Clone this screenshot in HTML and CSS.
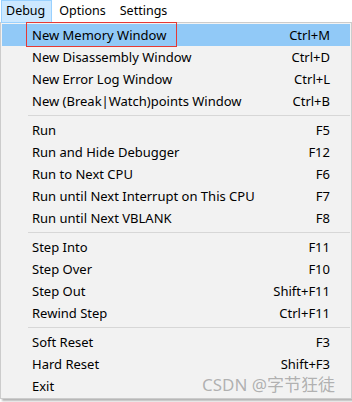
FILE: index.html
```html
<!DOCTYPE html>
<html lang="en">
<head>
  <meta charset="UTF-8" />
  <title>Debug menu</title>
  <link rel="stylesheet" href="styles.css">
</head>
<body>

<!-- Menu bar -->
<div class="menubar">
  <span class="menubar-item open">Debug</span>
  <span class="menubar-item">Options</span>
  <span class="menubar-item">Settings</span>
</div>

<!-- Dropdown -->
<div class="popup">
  <div class="item active"><span class="label">New Memory Window</span><span class="key">Ctrl+M</span></div>
  <div class="item"><span class="label">New Disassembly Window</span><span class="key">Ctrl+D</span></div>
  <div class="item"><span class="label">New Error Log Window</span><span class="key">Ctrl+L</span></div>
  <div class="item"><span class="label">New (Break|Watch)points Window</span><span class="key">Ctrl+B</span></div>
  <div class="sep"></div>
  <div class="item"><span class="label">Run</span><span class="key">F5</span></div>
  <div class="item"><span class="label">Run and Hide Debugger</span><span class="key">F12</span></div>
  <div class="item"><span class="label">Run to Next CPU</span><span class="key">F6</span></div>
  <div class="item"><span class="label">Run until Next Interrupt on This CPU</span><span class="key">F7</span></div>
  <div class="item"><span class="label">Run until Next VBLANK</span><span class="key">F8</span></div>
  <div class="sep"></div>
  <div class="item"><span class="label">Step Into</span><span class="key">F11</span></div>
  <div class="item"><span class="label">Step Over</span><span class="key">F10</span></div>
  <div class="item"><span class="label">Step Out</span><span class="key">Shift+F11</span></div>
  <div class="item"><span class="label">Rewind Step</span><span class="key">Ctrl+F11</span></div>
  <div class="sep"></div>
  <div class="item"><span class="label">Soft Reset</span><span class="key">F3</span></div>
  <div class="item"><span class="label">Hard Reset</span><span class="key">Shift+F3</span></div>
  <div class="item"><span class="label">Exit</span><span class="key"></span></div>
</div>

<!-- annotation + watermark -->
<div class="red-box"></div>
<div class="watermark">CSDN @字节狂徒</div>

</body>
</html>
```

FILE: styles.css
```css
body {
  margin: 0;
  padding: 0;
  background: #fff;
  font-family: "Noto Sans", "Noto Sans CJK SC", sans-serif;
  font-size: 12px;
  color: #000;
  position: relative;
  width: 352px;
  height: 402px;
  overflow: hidden;
}

/* Menu bar */
.menubar {
  display: flex;
  height: 22px;
  align-items: stretch;
  padding-left: 1px;
  gap: 2px;
}

.menubar-item {
  display: flex;
  align-items: center;
  padding: 0 6px 2px 4px;
  border: 1px solid transparent;
  height: 19px;
  font-size: 12.5px;
}

.menubar-item.open {
  background: #cce8ff;
  border-color: #99d1ff;
}

/* Dropdown */
.popup {
  width: 348px;
  background: #f2f2f2;
  border: 1px solid #cccccc;
  padding: 1px;
  box-shadow: 2px 2px 2px rgba(0,0,0,0.3);
}

.item {
  display: flex;
  align-items: center;
  height: 22px;
  padding-left: 30px;
  padding-right: 20px;
  font-size: 13px;
}

.item.active {
  background: #91c9f7;
}

.label {
  flex: 1;
}

.sep {
  height: 1px;
  background: #d7d7d7;
  margin: 3px 0 3px 26px;
}

.red-box {
  position: absolute;
  left: 26px;
  top: 22px;
  width: 149px;
  height: 23px;
  border: 1px solid #e53935;
}

.watermark {
  position: absolute;
  left: 202px;
  top: 371px;
  font-size: 17px;
  color: rgba(120,120,120,0.55);
  font-family: "Noto Sans", "Noto Sans CJK SC", sans-serif;
}
```
